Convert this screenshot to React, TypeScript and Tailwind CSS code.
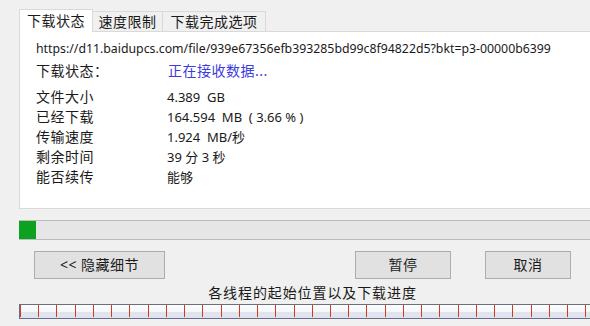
import React from "react";

const rows: [string, string][] = [
  ["文件大小", "4.389  GB"],
  ["已经下载", "164.594  MB  ( 3.66 % )"],
  ["传输速度", "1.924  MB/秒"],
  ["剩余时间", "39 分 3 秒"],
  ["能否续传", "能够"],
];

const font = { fontFamily: '"Noto Sans", "Noto Sans CJK SC", sans-serif' };

export default function App() {
  const segs = Array.from({ length: 34 });
  return (
    <div
      className="w-[590px] h-[326px] bg-[#f0f0f0] overflow-hidden text-[#1a1a1a] text-[14px] leading-[20px]"
      style={font}
    >
      {/* tabs */}
      <div className="flex items-end pl-[19px] pt-[8px] h-[31px]">
        <div className="h-[23px] w-[74px] bg-white border border-b-0 border-[#d9d9d9] flex items-center justify-center tracking-[0.5px] relative z-10 -mb-px">
          下载状态
        </div>
        <div className="h-[20px] w-[70px] border border-b-0 border-l-0 border-[#d9d9d9] flex items-center justify-center tracking-[0.5px]">
          速度限制
        </div>
        <div className="h-[20px] w-[103px] border border-b-0 border-l-0 border-[#d9d9d9] flex items-center justify-center tracking-[0.5px]">
          下载完成选项
        </div>
      </div>
      {/* panel */}
      <div className="ml-[19px] w-[600px] h-[178px] bg-white border border-[#d9d9d9] pt-[7px] pl-[16px]">
        <div className="h-[20px] text-[12.3px] whitespace-nowrap">
          https://d11.baidupcs.com/file/939e67356efb393285bd99c8f94822d5?bkt=p3-00000b6399
        </div>
        <div className="h-[20px] mt-[2px] flex tracking-[0.5px]">
          <div className="w-[132px]">下载状态：</div>
          <div className="text-[#3c3cdc]">正在接收数据...</div>
        </div>
        <div className="mt-[6px]">
          {rows.map(([k, v]) => (
            <div key={k} className="h-[20px] flex">
              <div className="w-[131px] tracking-[0.5px]">{k}</div>
              <div className="whitespace-pre text-[13px]">{v}</div>
            </div>
          ))}
        </div>
      </div>
      {/* progress */}
      <div className="ml-[19px] mt-[11px] h-[20px] border-y border-[#bcbcbc] bg-[#e6e6e6] flex">
        <div className="w-[17px] bg-[#0ca11f]" />
      </div>
      {/* buttons */}
      <div className="flex mt-[11px] h-[28px]">
        <button className="ml-[34px] w-[131px] h-[28px] bg-[#e1e1e1] border border-[#adadad] tracking-[0.5px]">
          &lt;&lt; 隐藏细节
        </button>
        <button className="ml-[190px] w-[96px] h-[28px] bg-[#e1e1e1] border border-[#adadad] tracking-[0.5px]">
          暂停
        </button>
        <button className="ml-[34px] w-[86px] h-[28px] bg-[#e1e1e1] border border-[#adadad] tracking-[0.5px]">
          取消
        </button>
      </div>
      {/* thread label */}
      <div className="ml-[19px] w-[587px] text-center mt-[3px] h-[22px] leading-[22px] tracking-[0.9px]">
        各线程的起始位置以及下载进度
      </div>
      {/* thread bar */}
      <div className="ml-[19px] w-[600px] h-[15px] border-y border-l border-[#687080] flex overflow-hidden bg-[linear-gradient(to_bottom,#fbfbfd_0%,#f6f7fb_50%,#e1e4f0_50%,#e1e4f0_100%)]">
        {segs.map((_, i) => (
          <div
            key={i}
            className="w-[18.24px] shrink-0 h-full border-l border-[#d23e1c] [border-top:1px_solid_#f0a060] -mt-px"
          />
        ))}
      </div>
    </div>
  );
}
